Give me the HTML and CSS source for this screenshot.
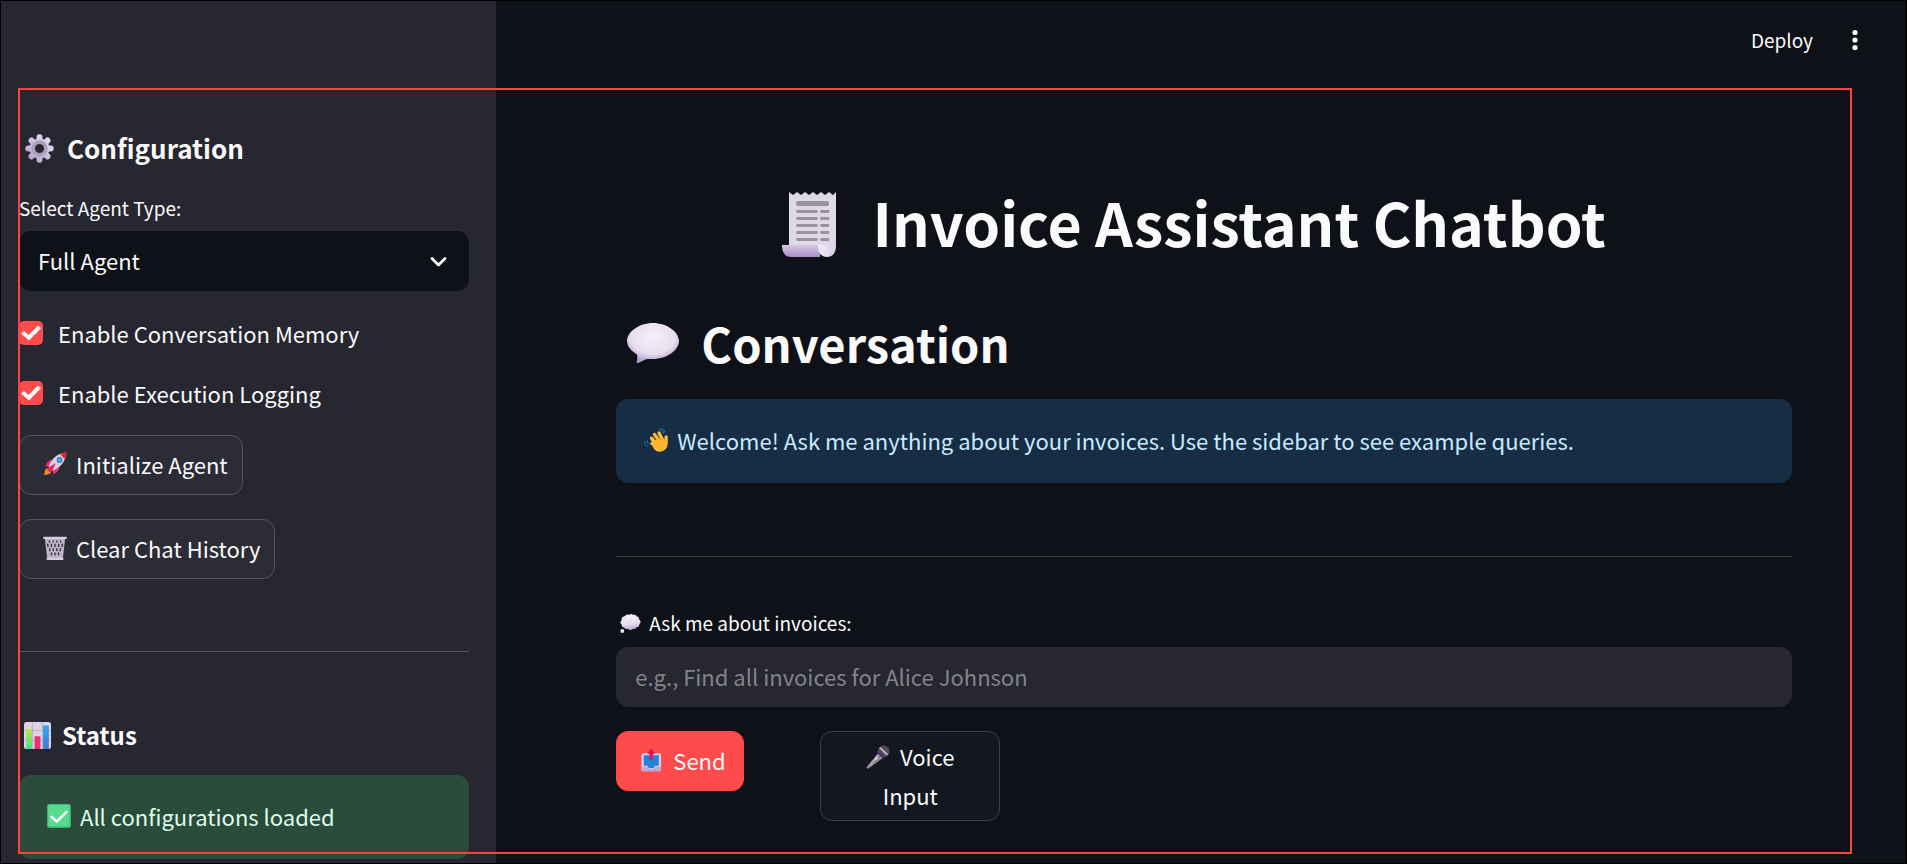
FILE: index.html
```html
<!DOCTYPE html>
<html lang="en">
<head>
<meta charset="utf-8">
<meta name="viewport" content="width=device-width, initial-scale=1">
<title>Invoice Assistant Chatbot</title>
<link rel="stylesheet" href="styles.css">
</head>
<body>
<div class="app">
  <aside class="sidebar">
    <h2 class="sidebar-title">
      <svg class="icon-gear" viewBox="0 0 32 32" aria-hidden="true">
        <defs><linearGradient id="gearFill" gradientUnits="userSpaceOnUse" x1="28" y1="4" x2="4" y2="28"><stop offset="0" stop-color="#e6ddf0"/><stop offset="1" stop-color="#b9a5d3"/></linearGradient></defs>
        <g stroke="url(#gearFill)" stroke-width="6.6" stroke-linecap="round">
          <path d="M16 3.600V28.400M3.600 16H28.400M7.200 7.200 24.800 24.800M24.800 7.200 7.200 24.800"/>
        </g>
        <circle cx="16" cy="16" r="11" fill="url(#gearFill)"/>
        <circle cx="16" cy="16" r="7" fill="none" stroke="#aaa0b8" stroke-width="4"/>
        <circle cx="16" cy="16" r="5" fill="#262730"/>
      </svg>
      Configuration
    </h2>
    <label class="field-label" for="agent-type">Select Agent Type:</label>
    <div class="select-wrap">
      <select id="agent-type" class="select"><option>Full Agent</option></select>
      <svg class="chevron" viewBox="0 0 24 24" aria-hidden="true"><path d="M6 9.500 12.500 16l6.500-6.500" fill="none" stroke="#fafafa" stroke-width="2.800" stroke-linecap="round" stroke-linejoin="round"/></svg>
    </div>
    <label class="check"><input type="checkbox" checked>Enable Conversation Memory</label>
    <label class="check"><input type="checkbox" checked>Enable Execution Logging</label>
    <button class="button" type="button">
      <svg class="emoji" viewBox="0 0 32 32" aria-hidden="true">
        <path d="M8 21c-4 0-6 3-6.500 9.500C7 30.500 11 29 11 25z" fill="#f08a24"/>
        <path d="M13 10c-5 0-8 4-9.500 9l7 0zM22 19c0 5-3.500 8-8 10.500L12.500 22z" fill="#f2316b"/>
        <path d="M31 1C20 1 11 9 7.500 20l5 5C23 21 31 12 31 1z" fill="#d9d0e4"/>
        <path d="M31 1c-3 0-6 .6-8.500 1.700l6.800 6.800C30.400 7 31 4 31 1z" fill="#e8233c"/>
        <path d="M9 19.500 17 15l-4 8.500-4 3.500-4-4z" fill="#e8245f"/>
        <circle cx="22" cy="10.500" r="3.800" fill="#4d5d85"/><circle cx="22" cy="10.500" r="2.800" fill="#44a5f5"/>
      </svg>
      Initialize Agent
    </button>
    <button class="button" type="button">
      <svg class="emoji" viewBox="0 0 32 32" aria-hidden="true">
        <path d="M2.500 3h27l-3 27h-21z" fill="#bdb4ca"/>
        <path d="M8.500 6.500v1.500m5-1.500v1.500m5-1.500v1.500m5-1.500v1.500M6.300 11l.3 3m4.600-3v3m4.800-3v3m4.800-3v3m4.900-3-.3 3M9 17v2.500m4.700-2.500v2.500m4.700-2.500v2.500m4.700-2.500v2.500M11.300 22.500v2.500m4.700-2.500v2.500m4.700-2.500v2.500" fill="none" stroke="#393540" stroke-width="1.900" stroke-linecap="round"/>
        <path d="M1.500 2.500h29M6 30.500h20" stroke="#d6cedf" stroke-width="2.800" stroke-linecap="round"/>
      </svg>
      Clear Chat History
    </button>
    <hr class="rule">
    <h3 class="status-title">
      <svg class="icon-chart" viewBox="0 0 32 32" aria-hidden="true">
        <defs>
          <linearGradient id="barGreen" x1="0" y1="0" x2="0" y2="1"><stop offset="0" stop-color="#b6e84f"/><stop offset="1" stop-color="#4fd98f"/></linearGradient>
          <linearGradient id="barBlue" x1="0" y1="0" x2="0" y2="1"><stop offset="0" stop-color="#2fa8f5"/><stop offset="1" stop-color="#4778cf"/></linearGradient>
        </defs>
        <rect width="32" height="32" rx="3" fill="#dcd4e5"/>
        <path d="M0 10h32M0 21.500h32M10 0v32M21.500 0v32" stroke="#b8adc6" stroke-width="1"/>
        <rect x="2.500" y="8" width="7" height="24" rx="1" fill="url(#barGreen)"/>
        <rect x="12.500" y="17" width="7" height="15" rx="1" fill="#ea3271"/>
        <rect x="22.500" y="4" width="7" height="28" rx="1" fill="url(#barBlue)"/>
      </svg>
      Status
    </h3>
    <div class="alert alert-success" role="status">
      <svg class="emoji" viewBox="0 0 32 32" aria-hidden="true"><rect width="32" height="32" rx="3" fill="#36b573"/><rect x="1.500" y="1" width="28.500" height="29" rx="2.500" fill="#58da8f"/><path d="m6 17 7 6.500L26 10.500" fill="none" stroke="#fff" stroke-width="3.200" stroke-linecap="round" stroke-linejoin="round"/></svg>
      All configurations loaded
    </div>
  </aside>

  <div class="content">
    <header class="toolbar">
      <button class="deploy" type="button">Deploy</button>
      <button class="menu" type="button" aria-label="Main menu"><svg viewBox="0 0 6 22" aria-hidden="true"><g fill="#fafafa"><circle cx="3" cy="3.500" r="2.600"/><circle cx="3" cy="11" r="2.600"/><circle cx="3" cy="18.500" r="2.600"/></g></svg></button>
    </header>
    <main class="main">
      <h1 class="title">
        <svg class="icon-receipt" viewBox="0 0 54 66" aria-hidden="true">
          <defs>
            <linearGradient id="rollFill" x1="0" y1="0" x2="0" y2="1"><stop offset="0" stop-color="#d5c9e2"/><stop offset="1" stop-color="#a98bcb"/></linearGradient>
            <linearGradient id="curlFill"><stop offset="0" stop-color="#f3ecfa"/><stop offset="1" stop-color="#d8cde6"/></linearGradient>
          </defs>
          <path d="M7 0l4 3 4-3 4 3 4-3 4 3 4-3 4 3 4-3 4 3 4-3 4 3 3-3v56H7z" fill="#dfd8e9"/>
          <path d="M0 53h38v12H9C2 65 0 59 0 53z" fill="url(#rollFill)"/>
          <path d="M54 48v6c0 7-3.500 11-9 11s-9-4-9-12c8 0 16-1 18-5z" fill="url(#curlFill)"/>
          <rect x="14" y="9" width="33" height="5" rx="2" fill="#99939f"/>
          <path d="M15.500 19.500h19m5 0h6.500M15.500 26.500h19m5 0h6.500M15.500 33.500h19m5 0h6.500M15.500 40.500h19m5 0h6.500M15.500 47.500h19m5 0h6.500" stroke="#99939f" stroke-width="2.800" stroke-linecap="round"/>
        </svg>
        Invoice Assistant Chatbot
      </h1>
      <h2 class="section-title">
        <svg class="icon-speech" viewBox="0 0 52 40" aria-hidden="true">
          <defs><radialGradient id="speechFill" cx=".5" cy=".35" r=".65"><stop offset="0" stop-color="#f4f0f7"/><stop offset=".65" stop-color="#e8deee"/><stop offset="1" stop-color="#ad99cb"/></radialGradient></defs>
          <path d="M26 0c14 0 26 9 26 18S40 36 26 36c-2.500 0-5-.3-7.500.5C16 37.500 13 39.500 10.500 40c-.8 0-1-.5-.8-1.200.8-3 .8-5.800.3-7.300C4 28 0 23 0 18 0 9 12 0 26 0z" fill="url(#speechFill)"/>
        </svg>
        Conversation
      </h2>
      <div class="alert alert-info" role="note">
        <svg class="emoji" viewBox="0 0 32 32" aria-hidden="true">
          <g fill="none" stroke="#2576b8" stroke-width="1.300" stroke-linecap="round"><path d="M20 1.500c3 .5 5.500 2.500 6.500 6M23 .5c2.500 1 4 2.500 4.800 5M1 17.500c-.5 3 1 5.500 3.500 7M4.500 17c-.3 2 .5 4 2.500 5.200"/></g>
          <path d="m10 14 9 12" stroke="#fbb52e" stroke-width="4"/>
          <g stroke="#fdbf38" stroke-width="4.400" stroke-linecap="round"><path d="m10.500 20.500 6 5.500M10 13.500l8 10M14 8.500l8 12M20 6.500l6 12M29.500 12l-.5 9"/></g>
          <path d="M14 17l11-5 3 5 3.300-3c.4 7 .7 11-2.300 14-4 4-9.500 5-14 1.500C12.500 27.500 9.500 23 14 17z" fill="#fdb52f"/>
          <path d="m13.500 11 5 6.500M18.500 9l5 7" stroke="#e58a20" stroke-width=".8"/>
        </svg>
        Welcome! Ask me anything about your invoices. Use the sidebar to see example queries.
      </div>
      <hr class="rule">
      <form class="ask">
        <label class="field-label ask-label" for="question">
          <svg class="icon-thought" viewBox="0 0 32 29" aria-hidden="true">
            <defs><linearGradient id="thoughtFill" x1=".4" y1="0" x2=".6" y2="1"><stop offset="0" stop-color="#f6f2fa"/><stop offset=".6" stop-color="#e5dfef"/><stop offset="1" stop-color="#b7a7d3"/></linearGradient></defs>
            <path d="M8 2.500C10 .5 12.500.5 14 1.500c2-2 5-1.500 6 0 3-1 5 .5 5.500 2.500 3 .5 4 2.500 3.500 4.500 3 2 3 5.500.5 7 0 3-1.500 4.500-4 4.500-1 2.500-3.500 3.500-6 2.500-2 2.500-5.500 2.500-7 0-2.500 1-5 0-6-2-3 0-4.500-2-4-4.500C0 14 0 11 2.500 9.500 2 6.500 4 4 6 4z" fill="url(#thoughtFill)"/><circle cx="3.500" cy="26" r="3" fill="#e8e0f1"/>
          </svg>
          Ask me about invoices:
        </label>
        <input id="question" class="text-input" type="text" placeholder="e.g., Find all invoices for Alice Johnson">
        <div class="actions">
          <button class="button primary" type="button">
            <svg class="emoji" viewBox="0 0 32 32" aria-hidden="true">
              <rect x="2" y="7" width="26" height="24" rx="2" fill="#d9cfe6"/>
              <path d="M5 9.500h20v14h-4.500c-1 0-1.500 3-3 3h-5c-1.500 0-2-3-3-3H5z" fill="#2383d8"/>
              <path d="M2 25h7c1 0 1.500 2.500 3 2.500h6c1.500 0 2-2.500 3-2.500h7v4a2 2 0 0 1-2 2H4a2 2 0 0 1-2-2z" fill="#bca6d7"/>
              <path d="M15 0 9.500 7.500h3V16h5V7.500h3z" fill="#d81b55"/>
            </svg>
            Send
          </button>
          <button class="button voice" type="button">
            <svg class="emoji" viewBox="0 0 32 32" aria-hidden="true">
              <path d="M17 10 1 29c-.5 1.500 0 2.500 2 2.500L23 17z" fill="#8e8794"/><path d="m17.500 12-12 15" stroke="#b9b2bf" stroke-width="2"/>
              <circle cx="23.500" cy="8.500" r="8" fill="#514a5d"/><path d="m15.500 7.500 9.500 9-2.500 1.500L14.500 10z" fill="#4b2c72"/>
              <path d="m18.500 3.500 10 9.500" stroke="#bdb6c4" stroke-width="2.400"/><circle cx="14" cy="18" r="1.200" fill="#fff"/>
            </svg>
            Voice Input
          </button>
        </div>
      </form>
    </main>
  </div>
  <div class="frame" aria-hidden="true"></div>
</div>
</body>
</html>
```
FILE: styles.css
```css
* { box-sizing: border-box; }

body {
  margin: 0;
  background: #0e1117;
  color: #fafafa;
  font-family: "Noto Sans CJK SC", "Noto Sans", sans-serif;
  font-size: 22px;
  line-height: 36px;
}

button, input, select { font: inherit; color: inherit; }
h1, h2, h3 { margin: 0; }
svg { flex: none; }

.app {
  position: relative;
  display: flex;
  min-height: 100vh;
  border: 1px solid #000;
}

.frame {
  position: absolute;
  inset: 87px 54px 9px 17px;
  border: 2px solid #ff4343;
  pointer-events: none;
}

.sidebar {
  display: flex;
  flex-direction: column;
  align-items: flex-start;
  gap: 24px;
  width: 26%;
  padding: 129px 27px 2px 18px;
  background: #262730;
}

.sidebar-title, .status-title, .title, .section-title {
  display: flex;
  align-items: center;
  font-weight: 600;
}

.sidebar-title { gap: 13px; margin-bottom: 3px; padding-left: 6px; font-size: 26px; line-height: 36px; }
.icon-gear { width: 29px; height: 29px; }

.field-label { font-size: 19px; line-height: 30px; }
.sidebar .field-label { margin-bottom: -16px; }

.select-wrap { position: relative; width: 100%; }
.select {
  display: block;
  width: 100%;
  height: 60px;
  padding: 0 60px 2px 19px;
  border: 0;
  border-radius: 12px;
  background: #0e1117;
  appearance: none;
}
.chevron { position: absolute; top: 18px; right: 19px; width: 24px; height: 24px; pointer-events: none; }

.check { display: flex; align-items: center; gap: 15px; }
.check input {
  width: 24px;
  height: 24px;
  margin: 0;
  border-radius: 5px;
  appearance: none;
  background: #ff4b4b;
  display: grid;
  place-items: center;
}
.check input::before {
  content: "";
  width: 20px;
  height: 15px;
  background: #fafafa;
  clip-path: polygon(0 54%, 15% 36%, 38% 64%, 85% 0, 100% 18%, 40% 100%);
}

.button {
  display: flex;
  align-items: center;
  gap: 9px;
  min-height: 60px;
  padding: 5px 14px 7px 23px;
  border: 1px solid #53545c;
  border-radius: 12px;
  background: #2b2c36;
}
.emoji { width: 24px; height: 24px; }

.rule {
  width: 100%;
  height: 1px;
  margin: 48px 0;
  border: 0;
  background: #53545c;
}

.status-title { gap: 11px; padding-left: 5px; font-size: 24px; line-height: 32px; margin-top: -5px; }
.icon-chart { width: 27px; height: 27px; }

.alert {
  display: flex;
  align-items: center;
  gap: 9px;
  width: 100%;
  min-height: 84px;
  padding: 17px 28px 19px;
  border-radius: 12px;
}
.alert-success { background: #2b4b3b; color: #dffde9; }
.alert-info { background: #172d43; color: #c7ebff; }

.content { flex: 1; min-width: 0; }

.toolbar {
  display: flex;
  justify-content: flex-end;
  align-items: center;
  gap: 39px;
  height: 78px;
  padding-right: 48px;
}
.deploy, .menu { padding: 0; border: 0; background: none; font-size: 19px; }
.menu { display: flex; }
.menu svg { width: 6px; height: 22px; }

.main { padding: 104px 114px 24px 120px; }
.title { justify-content: center; gap: 36px; padding-right: 20px; font-size: 59px; font-weight: 700; line-height: 78px; }
.icon-receipt { width: 54px; height: 66px; margin-top: 6px; }
.section-title { gap: 22px; margin: 50px 0 24px; padding-left: 11px; font-size: 47px; line-height: 64px; }
.icon-speech { width: 52px; height: 40px; }

.main .rule { margin: 73px 0 51px; background: #3a3c41; }

.ask { display: flex; flex-direction: column; }
.ask-label { display: flex; align-items: center; gap: 8px; padding-left: 4px; margin-bottom: 9px; }
.icon-thought { width: 21px; height: 19px; }

.text-input {
  width: 100%;
  height: 60px;
  padding: 0 19px 2px;
  border: 0;
  border-radius: 12px;
  background: #262730;
}
.text-input::placeholder { color: #83848a; opacity: 1; }

.actions {
  display: grid;
  grid-template-columns: 180px 180px;
  gap: 24px;
  align-items: start;
  margin-top: 24px;
}
.primary { justify-self: start; padding: 5px 17px 7px 23px; border-color: #ff4b4b; background: #ff4b4b; }
.voice {
  display: block;
  padding: 5px 40px;
  border-color: #3e4046;
  background: #131720;
  line-height: 39px;
  text-align: center;
}
.voice .emoji { margin-right: 5px; vertical-align: -3px; }
```
